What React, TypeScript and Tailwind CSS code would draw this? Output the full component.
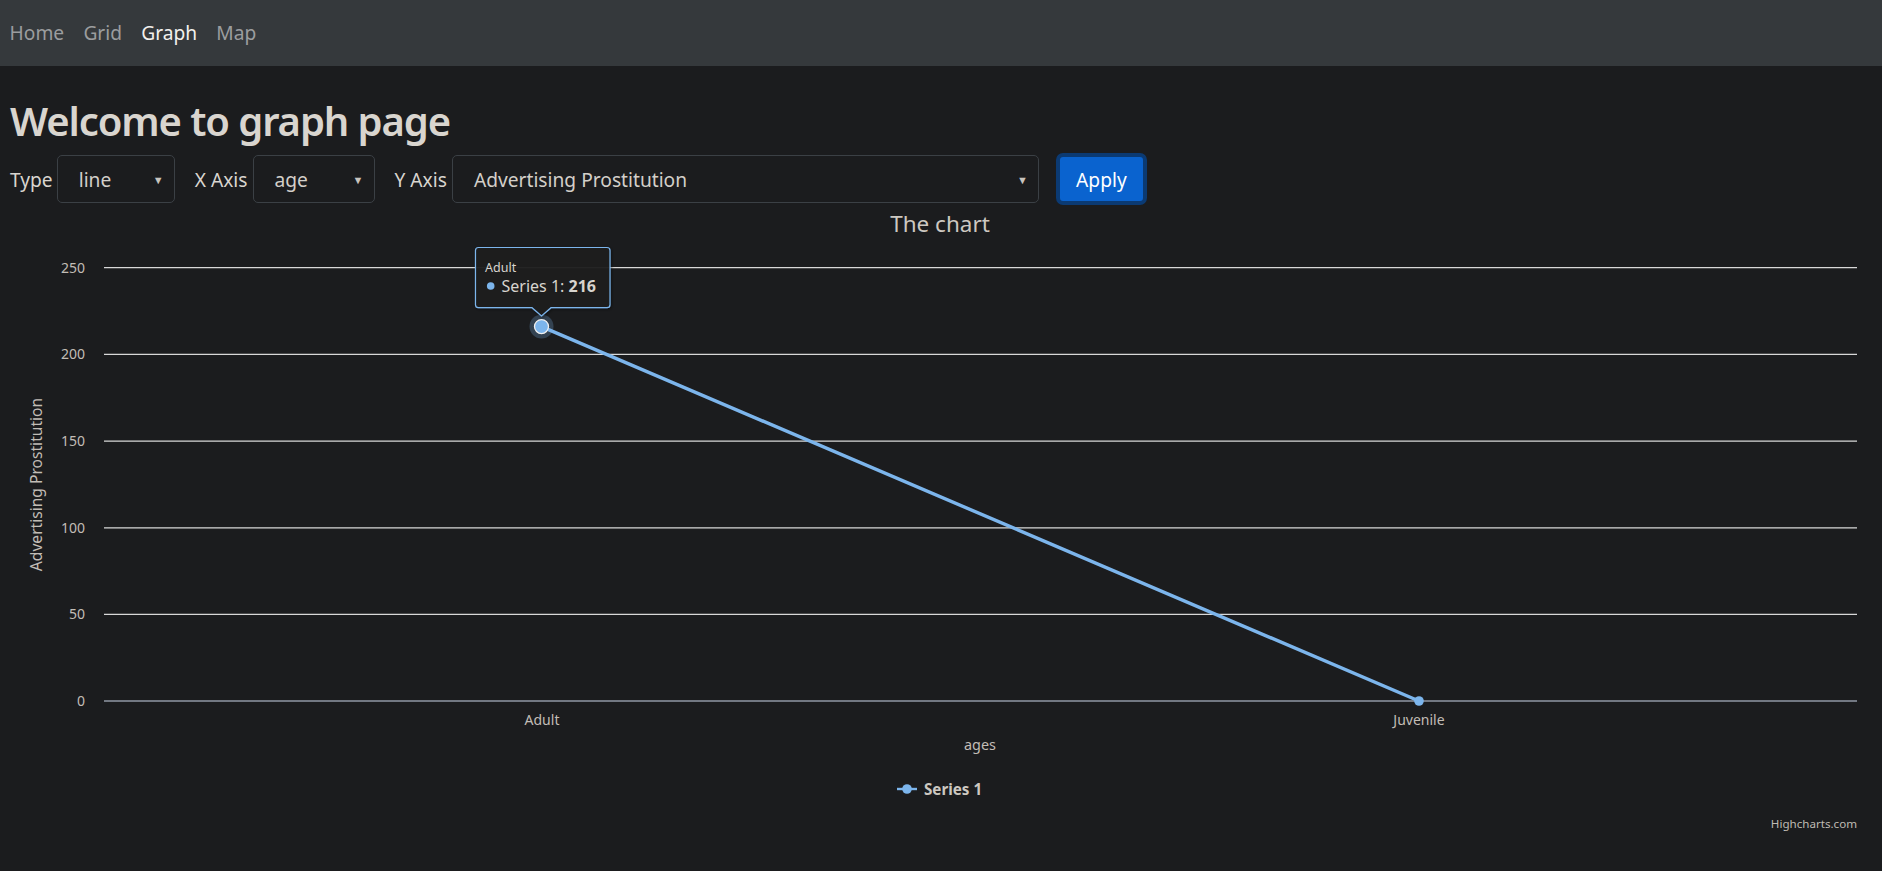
import React from "react";

const navItems = [
  { label: "Home", active: false },
  { label: "Grid", active: false },
  { label: "Graph", active: true },
  { label: "Map", active: false },
];

const yTicks = [
  { v: 250, y: 267.7 },
  { v: 200, y: 354.4 },
  { v: 150, y: 441.1 },
  { v: 100, y: 527.8 },
  { v: 50, y: 614.4 },
  { v: 0, y: 701 },
];

function Select({ value, width }: { value: string; width: string }) {
  return (
    <div
      className={`${width} h-[48px] flex items-center justify-between rounded-[5px] border border-[#3b4045] bg-[#1b1c1e] pl-[21px] pr-[10px] pt-[3px] text-[19.2px] text-[#d3cfc9]`}
    >
      <span>{value}</span>
      <span className="text-[11px] text-[#c8c4be]">▼</span>
    </div>
  );
}

function Chart() {
  const font = "'Noto Sans', sans-serif";
  return (
    <svg
      className="block"
      width="1882"
      height="663"
      viewBox="0 208 1882 663"
      style={{ fontFamily: font }}
    >
      <text x="940" y="232" textAnchor="middle" fontSize="22.5" fill="#cdc8c1">
        The chart
      </text>

      {yTicks.map((t) => (
        <g key={t.v}>
          <line
            x1="104"
            x2="1857"
            y1={t.y}
            y2={t.y}
            stroke={t.v === 0 ? "#c9d3e6" : "#d8d8d8"}
            strokeWidth="1.2"
          />
          <text x="85" y={t.y + 4.8} textAnchor="end" fontSize="14" fill="#c2bdb6">
            {t.v}
          </text>
        </g>
      ))}

      <text
        x="38"
        y="484.5"
        transform="rotate(-90 38 484.5)"
        textAnchor="middle"
        dominantBaseline="middle"
        fontSize="15.6"
        fill="#c2bdb6"
      >
        Advertising Prostitution
      </text>

      <text x="542" y="725" textAnchor="middle" fontSize="14" fill="#c2bdb6">
        Adult
      </text>
      <text x="1419" y="725" textAnchor="middle" fontSize="14" fill="#c2bdb6">
        Juvenile
      </text>
      <text x="980" y="750" textAnchor="middle" fontSize="14.4" fill="#c2bdb6">
        ages
      </text>

      <line x1="541.5" y1="326.6" x2="1419" y2="701" stroke="#7cb5ec" strokeWidth="3.4" strokeLinecap="round" />
      <circle cx="1419" cy="701" r="4.8" fill="#7cb5ec" />
      <circle cx="541.5" cy="326.6" r="12" fill="#7cb5ec" fillOpacity="0.25" />
      <circle cx="541.5" cy="326.6" r="7" fill="#7cb5ec" stroke="#f0f0f0" strokeWidth="1.3" />

      <defs>
        <filter id="tipShadow" x="-20%" y="-20%" width="140%" height="150%">
          <feDropShadow dx="1" dy="1" stdDeviation="1.5" floodColor="#000" floodOpacity="0.5" />
        </filter>
      </defs>
      <path
        d="M 478.5 247.5 L 607 247.5 Q 610 247.5 610 250.5 L 610 304.7 Q 610 307.7 607 307.7 L 551 307.7 L 541.5 316 L 532 307.7 L 478.5 307.7 Q 475.5 307.7 475.5 304.7 L 475.5 250.5 Q 475.5 247.5 478.5 247.5 Z"
        fill="#1b1c1e"
        fillOpacity="0.92"
        stroke="#7cb5ec"
        strokeWidth="1.2"
        filter="url(#tipShadow)"
      />
      <text x="485" y="271.5" fontSize="12.5" fill="#d8d4ce">
        Adult
      </text>
      <circle cx="490.7" cy="286" r="3.8" fill="#7cb5ec" />
      <text x="501.5" y="291.5" fontSize="16" fill="#d8d4ce">
        Series 1: <tspan fontWeight="bold">216</tspan>
      </text>

      <line x1="897" x2="917" y1="789" y2="789" stroke="#7cb5ec" strokeWidth="2.4" />
      <circle cx="907" cy="789" r="4.8" fill="#7cb5ec" />
      <text x="924" y="794.5" fontSize="15.2" fontWeight="bold" fill="#cdc8c1">
        Series 1
      </text>

      <text x="1857" y="828" textAnchor="end" fontSize="11.6" fill="#bfbab3">
        Highcharts.com
      </text>
    </svg>
  );
}

export default function App() {
  return (
    <div
      className="min-h-[871px] bg-[#1b1c1e] text-[#e0dcd6]"
      style={{ fontFamily: "'Noto Sans', 'Open Sans', sans-serif" }}
    >
      <nav className="h-[66px] bg-[#35393c] flex items-center">
        {navItems.map((n) => (
          <a
            key={n.label}
            className={`px-[9.6px] text-[19.2px] ${n.active ? "text-[#f2f0ed]" : "text-[#9b9d9f]"}`}
          >
            {n.label}
          </a>
        ))}
      </nav>

      <div className="px-[10px]">
        <h1 className="pt-[29px] h-[84px] text-[40px] font-semibold leading-[52px] tracking-[-1.1px] text-[#d9d5cf]">
          Welcome to graph page
        </h1>
        <div className="flex items-center h-[58px] text-[19.2px] text-[#d9d5cf]">
          <span className="mr-[4px] pt-[3px]">Type</span>
          <Select value="line" width="w-[118px]" />
          <span className="ml-[20px] mr-[5px] pt-[3px]">X Axis</span>
          <Select value="age" width="w-[122px]" />
          <span className="ml-[20px] mr-[5px] pt-[3px]">Y Axis</span>
          <Select value="Advertising Prostitution" width="w-[587px]" />
          <button className="ml-[17px] h-[52px] w-[91px] rounded-[7px] border-[4px] border-[#0b3a73] bg-[#0a63cf] pt-[3px] text-[19.2px] text-white">
            Apply
          </button>
        </div>
      </div>

      <Chart />
    </div>
  );
}
